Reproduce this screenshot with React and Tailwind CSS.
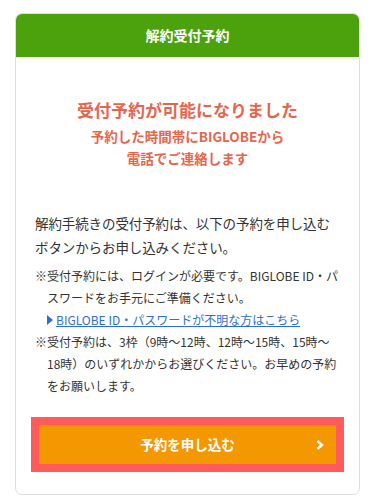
export default function App() {
  return (
    <div
      className="min-h-[497px] bg-white pt-[13px] px-[15px] text-[#333]"
      style={{ fontFamily: '"Noto Sans CJK JP", "Noto Sans", sans-serif' }}
    >
      <div className="rounded-[7px] border border-[#dedede] overflow-hidden">
        <div className="h-[43px] bg-[#4ca20c] flex items-center justify-center text-white text-[14px] font-bold">
          解約受付予約
        </div>
        <div className="px-[19px] pt-[40px] pb-[30px]">
          <div className="text-center text-[#e3674d] font-bold">
            <p className="text-[17px] leading-[26px]">受付予約が可能になりました</p>
            <p className="text-[13.5px] leading-[22px] mt-[2px]">予約した時間帯にBIGLOBEから</p>
            <p className="text-[13.5px] leading-[22px]">電話でご連絡します</p>
          </div>

          <p className="mt-[42px] text-[13.5px] leading-[24px] tracking-[-0.1px]">
            解約手続きの受付予約は、以下の予約を申し込むボタンからお申し込みください。
          </p>

          <div className="mt-[6px] text-[12px] leading-[22px]">
            <p className="pl-[12px] -indent-[12px]">
              ※受付予約には、ログインが必要です。BIGLOBE ID・パスワードをお手元にご準備ください。
            </p>
            <p className="pl-[12px]">
              <a href="#" className="inline-flex items-center gap-[3px] text-[#2d6fd0]">
                <svg width="6" height="10" viewBox="0 0 6 10" className="shrink-0">
                  <polygon points="0,0 6,5 0,10" fill="#2d6fd0" />
                </svg>
                <span className="underline">BIGLOBE ID・パスワードが不明な方はこちら</span>
              </a>
            </p>
            <p className="pl-[12px] -indent-[12px]">
              ※受付予約は、3枠（9時～12時、12時～15時、15時～18時）のいずれかからお選びください。お早めの予約をお願いします。
            </p>
          </div>

          <div className="mt-[28px] px-[4px]">
            <button className="relative w-full h-[39px] bg-[#f39800] outline-8 outline-solid outline-[#ff5b5b] text-white text-[13.5px] font-bold flex items-center justify-center">
              予約を申し込む
              <svg
                width="8"
                height="11"
                viewBox="0 0 8 11"
                className="absolute right-[12px] top-1/2 -translate-y-1/2"
              >
                <polyline points="1.5,1.5 6,5.5 1.5,9.5" fill="none" stroke="#fff" strokeWidth="2.4" />
              </svg>
            </button>
          </div>
        </div>
      </div>
    </div>
  );
}
